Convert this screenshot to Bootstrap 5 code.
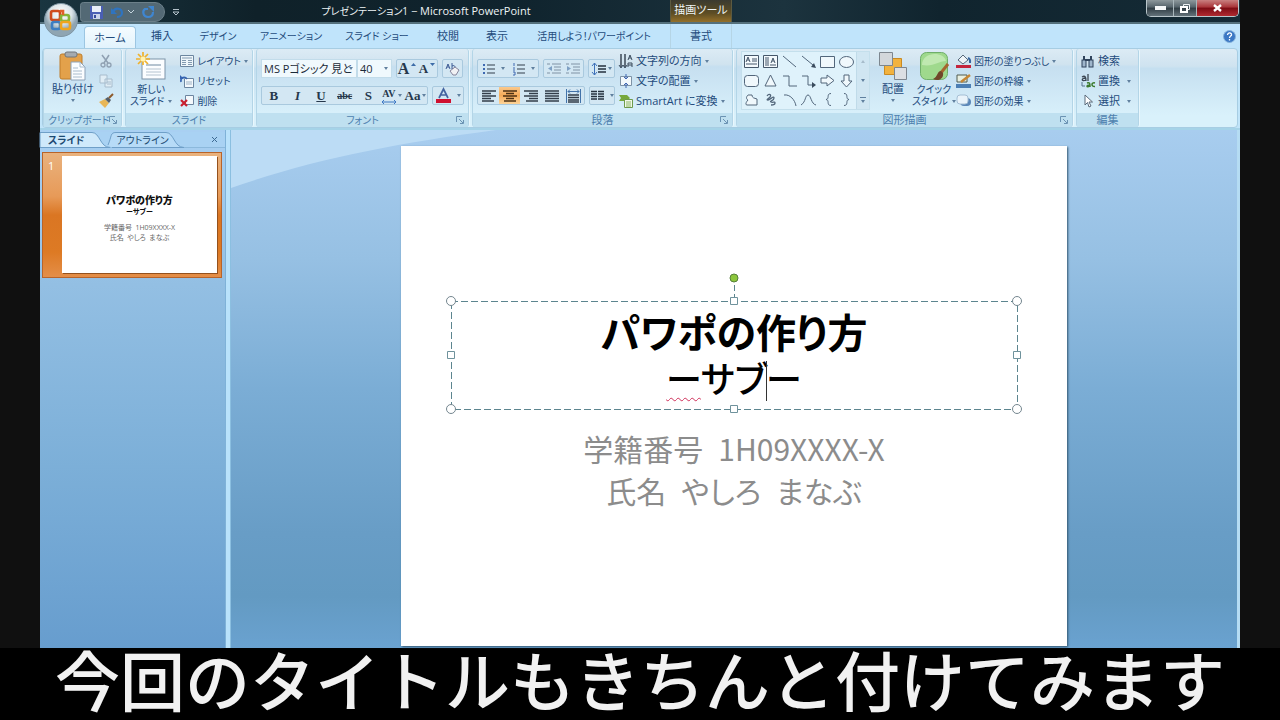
<!DOCTYPE html>
<html lang="ja">
<head>
<meta charset="utf-8">
<meta name="viewport" content="width=device-width, initial-scale=1">
<title>プレゼンテーション1 - Microsoft PowerPoint</title>
<link href="https://cdn.jsdelivr.net/npm/bootstrap@5.3.0/dist/css/bootstrap.min.css" rel="stylesheet">
<style>
body{background:#101010;font-family:"Open Sans","Noto Sans CJK JP",sans-serif;font-feature-settings:"palt";font-size:11px;line-height:12px;color:#234b7c}
button,select{font:inherit;font-feature-settings:inherit;color:inherit;background:none;border:0;padding:0;white-space:nowrap}
svg{display:block;flex:none;overflow:visible}
.s10{font-size:10px}
.app{margin:0 40px;background:#c3e5fb}
.tri{display:inline-block;flex:none;border:2px solid transparent;border-top:3px solid #60809f;border-bottom:0}
/* title bar */
.titlebar{height:24px;background:linear-gradient(90deg,#1a3540,#0f2129 18%,#10242e 40%,#1c333e 62%,#10242e 75%,#152b36);border-bottom:2px solid #54707c;color:#eef4f6}
.tools-left{width:146px;height:24px;padding-left:40px}
.qat{width:85px;height:20px;border-radius:4px 12px 12px 4px;background:#536975;border:1px solid #6c808a;padding-left:9px}
.doc-title{width:480px;line-height:22px}
.ctx{width:62px;height:22px;padding-top:4px;background:linear-gradient(#3a3a30,#5d4d24 60%,#94702a);border:1px solid #5d5a40;border-width:0 1px}
.winbtns{height:17px;border:1px solid #b9c6cb;border-top:0;border-radius:0 0 5px 5px;overflow:hidden;margin-right:1px}
.winbtns button{height:16px;border-right:1px solid #a9b6bb;background:linear-gradient(#8d989c,#54626a 45%,#2f3c43 50%,#63727a)}
.winbtns .min{width:27px}.winbtns .max{width:23px}
.winbtns .cls{width:41px;border:0;background:linear-gradient(#c98080,#a83338 45%,#7c0b13 50%,#b02a30)}
.orb{left:43px;top:3px;z-index:3}
/* tabs */
.tabs{height:24px;background:#c0e4fb;display:grid;grid-template-columns:44px 52px 52px 60px 86px 86px 56px 42px 152px 62px 1fr;align-items:stretch}
.tabs .on{background:linear-gradient(#f5fcff,#e2f3fc);border:1px solid #9cc6e2;border-bottom:0;border-radius:4px 4px 0 0;margin-top:2px}
.tabs .fmt{border:1px solid #b5d5e6;border-width:0 1px}
/* ribbon */
.ribbon{height:82px;padding:0 2px;background:#c0e4f9;border-bottom:2px solid #a5d3e8}
.ribbon-in{gap:3px;border:1px solid #a7cde3;border-radius:4px;background:linear-gradient(#dcebf5,#cfe3f0 22%,#c5dff0 25%,#d9f1fb 85%);height:80px}
.grp{height:78px;border-radius:3px;border:1px solid #b3d5e7;border-top:0;box-shadow:1px 0 0 #e9f7fd;background:linear-gradient(#dcebf5,#d0e3ef 20%,#c6dff0 23%,#d7effa 82%)}
.grp-main{height:64px;padding:2px 4px 0}
.grp-label{height:14px;background:#bfe0f0;color:#4d7fae;text-align:center;padding-top:1px;position:relative}
.launch{position:absolute;right:4px;top:3px}
.g1{width:79px}.g2{width:128px}.g3{width:213px}.g4{width:261px}.g5{width:337px}.g6{width:63px}
.rows{display:grid;grid-template-rows:repeat(3,20px);align-items:center}
.rows button{display:flex;align-items:center;gap:3px;height:20px}
.big{display:flex;flex-direction:column;align-items:center;height:60px}
.big svg{margin-bottom:2px}
.bgrp{display:flex;align-items:center;border:1px solid #a9c9de;border-radius:2px;height:19px;background:#d3e7f3}
.bgrp button{display:flex;align-items:center;justify-content:center;gap:2px;height:17px;flex:1 1 0}
.lat{font-family:"Liberation Serif",serif;font-weight:700;font-size:13px;color:#26384c}
.fsel{appearance:none;background:#f0f9fd;color:#1b2a38;height:19px;border:1px solid #c2dcea;padding:0 2px;width:96px;overflow:hidden}
.fsz{width:35px}
.selwrap{position:relative}
.selwrap .tri{position:absolute;right:4px;top:8px}
.hot{background:linear-gradient(#fbc98c,#f5ab58 50%,#fdd59a)}
.gal{display:grid;grid-template-columns:repeat(6,19px) 13px;grid-template-rows:repeat(3,19px);border:1px solid #c4dfec;background:#dff2fb;width:129px;height:59px}
.gal button{display:flex;align-items:center;justify-content:center}
.gal .sc{background:#d0e6f2;border-left:1px solid #c0dbe9}
/* work area */
.side{width:186px;background:linear-gradient(#a9d0f2,#93bfe3 30%,#7cafd8 65%,#679dce);border-right:1px solid #7fb2d8}
.side-tabs{height:16px;margin:2px 0 4px;color:#1d4a72;border-bottom:1px solid #8cb9dc;background:#a9d2f3}
.thumb{width:180px;height:126px;margin-left:2px;border:1px solid #b8642a;background:linear-gradient(#e9b27e,#e79a58 35%,#da7623 50%,#dd7a24 80%,#e48e48);padding:3px 4px 4px 5px}
.mini{width:155px;background:#fff;color:#111;box-shadow:1px 1px 0 #94511d;padding-top:38px;font-size:7px;line-height:10px;text-align:center}
.mini b{font-size:10px;line-height:13px;font-weight:900}
.mini .gr{color:#666;margin-top:6px}
.split{width:5px;background:#b9e2fb;border-right:1px solid #8bbfe0}
.edge{width:3px;background:#b5dcf3}
.canvas{background:linear-gradient(#a8cdef,#96c0e3 25%,#7badd5 50%,#689dc6 78%,#639ac2 90%,#6aa2d0);padding:16px 16px 2px;min-height:518px}
.swoosh{position:absolute;left:0;top:0}
.slide{position:relative;width:666px;max-width:100%;height:500px;background:#fff;margin:0 auto;box-shadow:1px 1px 2px #32566f;padding:155px 50px 0;text-align:center;font-family:"Noto Sans CJK JP",sans-serif}
.tbox{height:108px;padding-top:6px;color:#000;position:relative}
.tbox svg{position:absolute;inset:0}
.tbox h1{font-size:40px;line-height:48px;font-weight:700;margin:0}
.tbox p{font-size:36px;line-height:44px;font-weight:500;margin:0}
.caret{display:inline-block;width:1px;height:40px;background:#333;vertical-align:-8px;margin-right:-1px}
.wavy{text-decoration:underline wavy #d0305a 1px;text-underline-offset:4px}
.subt{padding-top:18px;color:#8c8c8c;font-size:30px;line-height:42px}
.caption-strip{height:72px;background:#000;color:#f1f1f1;font-family:"Noto Sans CJK JP",sans-serif;font-feature-settings:normal;font-size:65px;font-weight:500;line-height:60px;white-space:nowrap}
</style>
</head>
<body class="d-flex flex-column min-vh-100">
<svg width="0" height="0" class="position-absolute"><defs>
<symbol id="launch" viewBox="0 0 8 8"><path d="M.5 6V.5H6M3 3l4 4M7.500 4v3.500H4" fill="none" stroke="#6b93b3"/></symbol>
</defs></svg>
<div class="app flex-grow-1 d-flex flex-column position-relative">
<header>
<button class="orb position-absolute start-0 ms-1" aria-label="Office ボタン"><svg width="34" height="34" viewBox="0 0 34 34"><defs><radialGradient id="og" cx=".5" cy=".3"><stop offset="0" stop-color="#fff"/><stop offset=".65" stop-color="#dbe4e9"/><stop offset="1" stop-color="#8fa5b2"/></radialGradient></defs><circle cx="17" cy="17" r="16.500" fill="url(#og)" stroke="#7e95a3"/><g fill="none" stroke-width="2.600"><rect x="7" y="8" width="9" height="9" rx="2" stroke="#cf4a1c"/><rect x="17" y="12" width="8" height="6" rx="2" stroke="#86b53a"/><rect x="8" y="19" width="8" height="7" rx="2" stroke="#3d7ec2"/><rect x="17" y="19" width="9" height="7" rx="2" stroke="#efa51d"/><path d="M16 8h3v4" stroke="#e0602a"/></g></svg></button>
<div class="titlebar d-flex align-items-start">
<div class="tools-left d-flex align-items-center">
<div class="qat d-flex align-items-center gap-2">
<button aria-label="上書き保存"><svg width="13" height="13"><path d="M0 0h13v13H0z" fill="#4a5fb4"/><path d="M2 0h9v6H2z" fill="#e9eef8"/><path d="M3 8h7v5H3z" fill="#c9d3ea"/><path d="M4 9h2v3H4z" fill="#364a9c"/></svg></button>
<button class="d-flex align-items-center gap-1" aria-label="元に戻す"><svg width="13" height="13"><path d="M2 6c2-5 9-4 9 1 0 3-3 4-5 4" fill="none" stroke="#2f74c0" stroke-width="2.200"/><path d="M0 2v6h6z" fill="#2f74c0"/></svg><svg width="6" height="4"><path d="M0 0l3 3 3-3" fill="none" stroke="#c4d4de"/></svg></button>
<button aria-label="やり直し"><svg width="13" height="13"><path d="M6 3H3C0 5 1 11 6 11c4 0 5-3 5-5" fill="none" stroke="#3f86d0" stroke-width="2.200"/><path d="M6 0h6v6z" fill="#3f86d0"/></svg></button>
</div>
<button class="ms-2" aria-label="クイック アクセス ツール バーのカスタマイズ"><svg width="6" height="7"><path d="M0 .5h6M0 3l3 3 3-3z" stroke="#b4c2ca" fill="none"/></svg></button>
</div>
<div class="doc-title text-center"><span class="s10">プレゼンテーション1</span> − Microsoft PowerPoint</div>
<div class="ctx ms-1 text-center text-nowrap">描画ツール</div>
<div class="winbtns d-flex ms-auto">
<button class="min" aria-label="最小化"><svg class="mx-auto" width="11" height="4"><path d="M0 0h11v4H0z" fill="#f4f7f8"/></svg></button>
<button class="max" aria-label="元に戻す（縮小）"><svg class="mx-auto" width="10" height="9"><path d="M3.500 2.500v-2h6v5h-2" fill="none" stroke="#eef2f4"/><path d="M1 3h6v5H1z" fill="none" stroke="#fff" stroke-width="2"/></svg></button>
<button class="cls" aria-label="閉じる"><svg class="mx-auto" width="9" height="8"><path d="M1 1l7 6M8 1L1 7" stroke="#fff" stroke-width="2.400"/></svg></button>
</div>
</div>
<nav class="tabs" aria-label="リボン タブ">
<span></span>
<button class="on">ホーム</button><button>挿入</button><button class="s10">デザイン</button><button class="s10">アニメーション</button><button class="s10">スライド ショー</button><button>校閲</button><button>表示</button><button class="s10">活用しよう！パワーポイント</button><button class="fmt">書式</button>
<button class="ms-auto me-1" aria-label="ヘルプ"><svg width="13" height="13"><circle cx="6.500" cy="6.500" r="6" fill="#3b78c4" stroke="#86b2dc"/><path d="M4.500 5c0-3 4.500-2.500 4 0-.3 1.200-2 1-2 3M6.500 9v1.500" fill="none" stroke="#fff" stroke-width="1.300"/></svg></button>
</nav>
<div class="ribbon"><div class="ribbon-in d-flex">
<section class="grp g1"><div class="grp-main d-flex justify-content-between">
<button class="big ms-1"><svg width="27" height="30"><rect x="1" y="3" width="22" height="25" rx="2" fill="#e3a14b" stroke="#bf7d2b"/><rect x="6" y="1" width="12" height="5" rx="2" fill="#a4aab0" stroke="#70767c"/><path d="M12 11h9l5 5v13H12z" fill="#fbfdff" stroke="#8da2b8"/><path d="M21 11v5h5M14 17h5M14 20h9M14 23h9M14 26h9" fill="none" stroke="#a9bccd"/></svg><span>貼り付け</span><i class="tri mt-1"></i></button>
<div class="rows me-1">
<button aria-label="切り取り"><svg width="14" height="14"><path d="M3 1l6 8M10 1L5 9" stroke="#8fa0b2" stroke-width="1.500"/><circle cx="4" cy="11" r="2" fill="none" stroke="#8fa0b2" stroke-width="1.300"/><circle cx="10" cy="11" r="2" fill="none" stroke="#8fa0b2" stroke-width="1.300"/></svg></button>
<button aria-label="コピー"><svg width="14" height="14"><path d="M1 1h7v8H1zM6 5h7v8H6z" fill="#e0edf5" stroke="#a7bccd"/><path d="M8 8h4M8 10h4" stroke="#a7bccd"/></svg></button>
<button aria-label="書式のコピー"><svg width="14" height="14"><path d="M0 8l6-3 4 4-4 5z" fill="#e8b656"/><path d="M6 5l3-2 3 3-2 3z" fill="#555e68"/><path d="M10 4l4-4" stroke="#8e5a2a" stroke-width="2"/></svg></button>
</div></div><div class="grp-label s10 text-start ps-1">クリップボード<svg class="launch" width="8" height="8"><use href="#launch"/></svg></div></section>

<section class="grp g2"><div class="grp-main d-flex gap-2">
<button class="big"><svg width="30" height="30"><rect x="6" y="8" width="23" height="20" fill="#fbfdff" stroke="#7c93a8"/><path d="M10 14h15" stroke="#b4c3d0" stroke-width="2"/><path d="M10 18h15M10 21h15M10 24h15" stroke="#b4c3d0"/><path d="M7 1v13M0 8h14M2 3l10 10M12 3L2 13" stroke="#efb12b" stroke-width="1.700"/><circle cx="7" cy="8" r="2.500" fill="#fff3b0"/></svg><span class="s10">新しい</span><span class="s10 d-flex align-items-center gap-1">スライド<i class="tri"></i></span></button>
<div class="rows s10">
<button><svg width="14" height="12"><path d="M.5.5h13v11H.5z" fill="#eef6fb" stroke="#6c86a0"/><path d="M2 3h10M2 5.500h4M2 7.500h4M2 9.500h4M8 5.500h4M8 7.500h4M8 9.500h4" stroke="#8199b0"/></svg>レイアウト<i class="tri"></i></button>
<button><svg width="14" height="13"><path d="M4.500 3.500h9v9h-9z" fill="#f4f9fc" stroke="#6c86a0"/><path d="M6 7h6M6 9h6" stroke="#9db2c5"/><path d="M1 7c-1-5 4-6 6-3" fill="none" stroke="#3563b0" stroke-width="1.600"/><path d="M0 0v4h4z" fill="#3563b0"/></svg>リセット</button>
<button><svg width="14" height="12"><path d="M5.500.5h8v9h-8z" fill="#f4f9fc" stroke="#6c86a0"/><path d="M1 5l6 6M7 5l-6 6" stroke="#c9202f" stroke-width="2.200"/></svg>削除</button>
</div></div><div class="grp-label s10">スライド</div></section>

<section class="grp g3"><div class="grp-main">
<div class="d-flex pt-2">
<div class="selwrap"><select class="fsel" aria-label="フォント"><option>MS Pゴシック 見と</option></select><i class="tri"></i></div>
<div class="selwrap"><select class="fsel fsz" aria-label="フォント サイズ"><option>40</option></select><i class="tri"></i></div>
<div class="bgrp ms-1" style="width:42px"><button class="lat fs-6" aria-label="フォントの拡大">A<svg width="5" height="4" class="mb-2"><path d="M0 3l2.500-3L5 3z" fill="#3d6ca8"/></svg></button><button class="lat" aria-label="フォントの縮小">A<svg width="5" height="4" class="mb-2"><path d="M0 0h5L2.500 3z" fill="#3d6ca8"/></svg></button></div>
<div class="bgrp ms-1" style="width:21px"><button aria-label="書式のクリア"><svg width="15" height="14"><path d="M1 7l2-5 2 5M2 5h2M7 1v6M7 4c4-2 4 4 0 2.500" fill="none" stroke="#3c5a94"/><path d="M5 9l5-4 4 3-3 5H8z" fill="#f1f1f4" stroke="#86859c"/></svg></button></div>
</div>
<div class="d-flex mt-2 gap-1">
<div class="bgrp lat" style="width:169px"><button><b>B</b></button><button><i>I</i></button><button><u>U</u></button><button class="s10"><s>abc</s></button><button>S</button><button class="s10" aria-label="文字の間隔"><span><span>AV</span><svg width="14" height="4"><path d="M0 2h14M2 0L0 2l2 2M12 0l2 2-2 2" fill="none" stroke="#3d78c4"/></svg></span><i class="tri"></i></button><button>Aa<i class="tri"></i></button></div>
<div class="bgrp" style="width:32px"><button aria-label="フォントの色"><svg width="15" height="15"><path d="M3 10L7.500 1 12 10M5 7h5" fill="none" stroke="#4464a0" stroke-width="1.700"/><path d="M0 11h15v4H0z" fill="#cf1030"/></svg><i class="tri ms-1"></i></button></div>
</div></div><div class="grp-label s10">フォント<svg class="launch" width="8" height="8"><use href="#launch"/></svg></div></section>

<section class="grp g4"><div class="grp-main d-flex gap-1">
<div>
<div class="d-flex gap-1 pt-2">
<div class="bgrp" style="width:62px"><button aria-label="箇条書き"><svg width="13" height="12"><path d="M5 2h8M5 6h8M5 10h8" stroke="#333f4d" stroke-width="1.200"/><path d="M1 2h2M1 6h2M1 10h2" stroke="#3e69b2" stroke-width="2"/></svg><i class="tri ms-1"></i></button><button aria-label="段落番号"><svg width="13" height="12"><path d="M5 2h8M5 6h8M5 10h8" stroke="#333f4d" stroke-width="1.200"/><path d="M2 0v3M1 5h2M1 7h2M1 9h2v3H1" fill="none" stroke="#3e69b2"/></svg><i class="tri ms-1"></i></button></div>
<div class="bgrp" style="width:41px"><button aria-label="インデントを減らす"><svg width="14" height="12"><path d="M0 1h3M5 1h9M7 4h7M7 7h7M5 10h9M0 10h3" stroke="#8093a5"/><path d="M5 3v5L1 5.500z" fill="#7ea0c4"/></svg></button><button aria-label="インデントを増やす"><svg width="14" height="12"><path d="M0 1h3M5 1h9M7 4h7M7 7h7M5 10h9M0 10h3" stroke="#8093a5"/><path d="M1 3v5l4-2.500z" fill="#7ea0c4"/></svg></button></div>
<div class="bgrp" style="width:27px"><button aria-label="行間"><svg width="14" height="14"><path d="M2.500 1v12M0 4l2.500-3L5 4M0 10l2.500 3L5 10" fill="none" stroke="#3f72ba"/><path d="M6 4h8M6 7h8M6 10h8" stroke="#26323f" stroke-width="1.400"/></svg><i class="tri"></i></button></div>
</div>
<div class="d-flex gap-1 mt-2">
<div class="bgrp" style="width:108px"><button aria-label="左揃え"><svg width="14" height="11"><path d="M0 1h14M0 3.500h9M0 6h14M0 8.500h9M0 11h12" stroke="#333e4a" stroke-width="1.300"/></svg></button><button class="hot" aria-label="中央揃え" aria-pressed="true"><svg width="14" height="11"><path d="M0 1h14M3 3.500h8M0 6h14M3 8.500h8M1 11h12" stroke="#4c3214" stroke-width="1.300"/></svg></button><button aria-label="右揃え"><svg width="14" height="11"><path d="M0 1h14M5 3.500h9M0 6h14M5 8.500h9M2 11h12" stroke="#333e4a" stroke-width="1.300"/></svg></button><button aria-label="両端揃え"><svg width="14" height="11"><path d="M0 1h14M0 3.500h14M0 6h14M0 8.500h14M0 11h14" stroke="#333e4a" stroke-width="1.300"/></svg></button><button aria-label="均等割り付け"><svg width="15" height="14"><path d="M.5 0v14M14.500 0v14M2 2.500h11M4 .5L2 2.500l2 2M11 .5l2 2-2 2" fill="none" stroke="#4273aa"/><path d="M2 6h11M2 8.500h11M2 11h11M2 13h11" stroke="#333e4a" stroke-width="1.300"/></svg></button></div>
<div class="bgrp" style="width:26px"><button aria-label="段組み"><svg width="13" height="11"><path d="M0 1.500h6M7 1.500h6M0 4h6M7 4h6M0 6.500h6M7 6.500h6M0 9h6M7 9h6" stroke="#26323f" stroke-width="1.500"/></svg><i class="tri ms-1"></i></button></div>
</div></div>
<div class="rows">
<button><svg width="14" height="14"><path d="M2 0v13M6 0v13" stroke="#26323f" stroke-width="1.300"/><path d="M0 11l2 3 2-3M4 11l2 3 2-3M9 6l2-5 2 5M10 4h2M9 13V9h4v4M9 11h4" fill="none" stroke="#3a4b5d"/></svg><span>文字列の方向</span><i class="tri"></i></button>
<button><svg width="14" height="14"><path d="M1.500 2.500h11v9h-11z" fill="#f3f9fc" stroke="#7d92a6"/><path d="M7 0v5M7 14V9M5 3l2 2 2-2M5 11l2-2 2 2" fill="none" stroke="#3e66b2"/></svg><span>文字の配置</span><i class="tri"></i></button>
<button><svg width="14" height="14"><path d="M0 1h8l3 3-3 3H0l2-3z" fill="#77a83c"/><path d="M5.500 5.500h8v8h-8z" fill="#f2f8e8" stroke="#6e9a4c"/><path d="M7 8h5M7 10h5M7 12h5" stroke="#8bb565"/></svg><span>SmartArt に変換</span><i class="tri"></i></button>
</div></div><div class="grp-label">段落<svg class="launch" width="8" height="8"><use href="#launch"/></svg></div></section>

<section class="grp g5"><div class="grp-main d-flex">
<div class="gal">
<button aria-label="テキスト ボックス"><svg width="15" height="13"><path d="M.5.5h14v12H.5z" fill="#f4fafd" stroke="#45576a"/><path d="M2 7l2-5 2 5M3 5h2M8 4h5M8 6h5M2 9h11" fill="none" stroke="#45576a"/></svg></button>
<button aria-label="縦書きテキスト ボックス"><svg width="15" height="13"><path d="M.5.5h14v12H.5z" fill="#f4fafd" stroke="#45576a"/><path d="M8 8l2-5 2 5M9 6h2M3 2v9M5 2v9M7 10h6" fill="none" stroke="#45576a"/></svg></button>
<button aria-label="直線"><svg width="14" height="13"><path d="M0 1l13 11" stroke="#52667b"/></svg></button>
<button aria-label="矢印"><svg width="14" height="13"><path d="M0 1l11 9" stroke="#52667b"/><path d="M14 13l-5-1 3-4z" fill="#3a4b5d"/></svg></button>
<button aria-label="正方形/長方形"><svg width="15" height="12"><path d="M.5.5h14v11H.5z" fill="#f0f8fc" stroke="#52667b"/></svg></button>
<button aria-label="円/楕円"><svg width="15" height="12"><ellipse cx="7.500" cy="6" rx="7" ry="5.500" fill="#f0f8fc" stroke="#52667b"/></svg></button>
<button class="sc" aria-label="上へ"><svg width="4" height="3"><path d="M0 3l2-3 2 3z" fill="#a7bccb"/></svg></button>
<button aria-label="角丸四角形"><svg width="15" height="12"><rect x=".5" y=".5" width="14" height="11" rx="3" fill="#f0f8fc" stroke="#52667b"/></svg></button>
<button aria-label="二等辺三角形"><svg width="13" height="13"><path d="M6.500 1L12 12H1z" fill="#f0f8fc" stroke="#52667b"/></svg></button>
<button aria-label="カギ線コネクタ"><svg width="15" height="12"><path d="M1 1h6v10h8" fill="none" stroke="#52667b"/></svg></button>
<button aria-label="カギ線矢印コネクタ"><svg width="15" height="12"><path d="M1 1h6v9h6" fill="none" stroke="#52667b"/><path d="M11 7l4 3-4 3z" fill="#3a4b5d"/></svg></button>
<button aria-label="右矢印"><svg width="15" height="13"><path d="M1 4h6V1l7 5.500L7 12V9H1z" fill="#f0f8fc" stroke="#52667b"/></svg></button>
<button aria-label="下矢印"><svg width="13" height="14"><path d="M4 1v6H1l5.500 6L12 7H9V1z" fill="#f0f8fc" stroke="#52667b"/></svg></button>
<button class="sc" aria-label="下へ"><i class="tri"></i></button>
<button aria-label="フリーフォーム"><svg width="14" height="12"><path d="M3 1h4c0 3 2 3 5 4v6H2c-2 0-1-3 1-5-2-1-2-3 0-5z" fill="#f0f8fc" stroke="#52667b"/></svg></button>
<button aria-label="フリーハンド"><svg width="12" height="13"><path d="M2 3c2-3 5-1 3 1S1 7 3 7s6-5 6-2-5 3-3 4 4-1 4 1-3 2-4 2" fill="none" stroke="#52667b" stroke-width="1.300"/></svg></button>
<button aria-label="円弧"><svg width="14" height="12"><path d="M1 1c6-1 11 5 12 11" fill="none" stroke="#52667b"/></svg></button>
<button aria-label="曲線"><svg width="15" height="12"><path d="M0 11C5 8 4 1 7 1s3 9 8 10" fill="none" stroke="#52667b"/></svg></button>
<button aria-label="左中かっこ"><svg width="6" height="13"><path d="M6 .5C1 .5 5 6 1 6.500c4 .5 0 6 5 6" fill="none" stroke="#52667b"/></svg></button>
<button aria-label="右中かっこ"><svg width="6" height="13"><path d="M0 .5c5 0 1 5.500 5 6-4 .5 0 6-5 6" fill="none" stroke="#52667b"/></svg></button>
<button class="sc" aria-label="その他"><svg width="6" height="6"><path d="M0 .5h6" stroke="#60809f"/><path d="M1 3h4L3 6z" fill="#60809f"/></svg></button>
</div>
<button class="big ms-2"><svg width="30" height="30"><path d="M6.500 7.500h17v16h-17z" fill="#f2b23e" stroke="#c98a23"/><path d="M1.500 1.500h13v13h-13z" fill="#d3d7db" stroke="#7d868f"/><path d="M16.500 16.500h12v12h-12z" fill="#dcdfe3" stroke="#7d868f"/></svg><span>配置</span><i class="tri mt-1"></i></button>
<button class="big ms-1 s10"><svg width="30" height="30"><rect x="1.500" y="1.500" width="27" height="27" rx="6" fill="#9fd98d" stroke="#6fae6a"/><path d="M3 14c0-14 22-14 24-4-8 0-12 6-24 4z" fill="#bfe8b0"/><path d="M29 13l-8 10" stroke="#a5652e" stroke-width="3"/><path d="M22 20c-4 0-3 6-8 8 6 3 11-1 10-6z" fill="#70472a"/></svg><span>クイック</span><span class="d-flex align-items-center gap-1">スタイル<i class="tri"></i></span></button>
<div class="rows">
<button><svg width="15" height="14"><path d="M2 6l5-5 5 5-5 4z" fill="#eef4f8" stroke="#56687a"/><path d="M12 4c3 1 2 4 2 5" fill="none" stroke="#38669f" stroke-width="2"/><path d="M0 11h15v3H0z" fill="#c4243c"/></svg><span class="s10">図形の塗りつぶし</span><i class="tri"></i></button>
<button><svg width="15" height="14"><path d="M1 1h10v7H1z" fill="#e8efe0" stroke="#505c50"/><path d="M5 8l9-7" stroke="#c58634" stroke-width="2.400"/><path d="M0 10h15v4H0z" fill="#4c7fb4"/></svg><span class="s10">図形の枠線</span><i class="tri"></i></button>
<button><svg width="15" height="14"><rect x="4" y="4" width="11" height="8" rx="4" fill="#5b87b8"/><rect x="1" y="1" width="11" height="9" rx="3" fill="#e9f3fa" stroke="#a5bfd4"/></svg><span class="s10">図形の効果</span><i class="tri"></i></button>
</div></div><div class="grp-label">図形描画<svg class="launch" width="8" height="8"><use href="#launch"/></svg></div></section>

<section class="grp g6"><div class="grp-main"><div class="rows">
<button><svg width="14" height="13"><path d="M3 1v4M10 1v4" stroke="#2f435c" stroke-width="2"/><rect x="1" y="5" width="4" height="7" fill="#9fb6cc" stroke="#2f435c"/><rect x="8" y="5" width="4" height="7" fill="#9fb6cc" stroke="#2f435c"/><path d="M4 5h5" stroke="#2f435c" stroke-width="2"/></svg>検索</button>
<button><svg width="14" height="14"><path d="M1 3c3-2 4 0 4 4M5 4c-5 0-5 4 0 2M7 0v7" fill="none" stroke="#3c4754" stroke-width="1.300"/><path d="M6 9c3-1 3 1 3 4M9 11c-4 0-4 3 0 1M14 9c-4-1-4 4 0 3.500" fill="none" stroke="#3c7a2c" stroke-width="1.500"/><path d="M1 8v4h3" fill="none" stroke="#56718c"/></svg>置換<i class="tri ms-1"></i></button>
<button><svg width="14" height="14"><path d="M4 1v10l2.500-2.500L8 13l2-1-2-4h3.500z" fill="#fff" stroke="#5a6a7b"/></svg>選択<i class="tri ms-1"></i></button>
</div></div><div class="grp-label">編集</div></section>
</div></div>
</header>

<main class="flex-grow-1 d-flex">
<aside class="side flex-shrink-0">
<div class="side-tabs d-flex align-items-center position-relative">
<svg class="position-absolute top-0 start-0" width="186" height="16"><path d="M0 15.500V.5h52c8 0 8 15 18 15z" fill="#cfe9fb" stroke="#6f9fc8"/><path d="M68 13c4-9 2-12.500 8-12.500h50c8 0 8 15 18 15H72" fill="#b7dbf7" stroke="#6f9fc8"/></svg>
<button class="position-relative fw-bold s10 ps-2">スライド</button><button class="position-relative s10 ms-4 me-auto ps-2">アウトライン</button><button class="me-1 pe-1" aria-label="閉じる"><svg width="5" height="5"><path d="M0 0l5 5M5 0L0 5" stroke="#3d6a93"/></svg></button></div>
<div class="thumb d-flex justify-content-between"><span class="text-white pt-1">1</span>
<div class="mini"><b class="d-block">パワポの作り方</b><div class="fw-bold">ーサブー</div><div class="gr">学籍番号&ensp;1H09XXXX-X<br>氏名&ensp;やしろ&ensp;まなぶ</div></div></div>
</aside>
<div class="split flex-shrink-0"></div>
<div class="canvas flex-grow-1 position-relative">
<svg class="swoosh" width="280" height="60"><path d="M0 0h265C160 14 80 30 0 58z" fill="#bcdcf5"/></svg>
<article class="slide">
<div class="tbox">
<svg width="100%" height="100%" aria-hidden="true"><rect width="100%" height="100%" fill="none" stroke="#5c858f" stroke-dasharray="7 3" shape-rendering="crispEdges"/><path d="M283-16V0" stroke="#5c858f" stroke-dasharray="6 3" shape-rendering="crispEdges"/><circle cx="50%" cy="-23" r="4" fill="#8cc63c" stroke="#56803a"/><g fill="#fff" stroke="#74868f"><circle cx="0" cy="0" r="4.500"/><circle cx="100%" cy="0" r="4.500"/><circle cx="0" cy="100%" r="4.500"/><circle cx="100%" cy="100%" r="4.500"/></g><g fill="#fff" stroke="#6f929c"><svg x="50%" y="0"><path d="M-3.500-3.500h7v7h-7z"/></svg><svg x="50%" y="100%"><path d="M-3.500-3.500h7v7h-7z"/></svg><svg x="0" y="50%"><path d="M-3.500-3.500h7v7h-7z"/></svg><svg x="100%" y="50%"><path d="M-3.500-3.500h7v7h-7z"/></svg></g></svg>
<h1>パワポの作り方</h1>
<p><span class="wavy">ー</span>サブ<span class="caret"></span>ー</p>
</div>
<div class="subt">学籍番号&ensp;1H09XXXX-X<br>氏名&ensp;やしろ&ensp;まなぶ</div>
</article>
</div>
<div class="edge flex-shrink-0"></div>
</main>
</div>
<div class="caption-strip text-center">今回のタイトルもきちんと付けてみます</div>
<script src="https://cdn.jsdelivr.net/npm/bootstrap@5.3.0/dist/js/bootstrap.bundle.min.js"></script>
</body>
</html>
